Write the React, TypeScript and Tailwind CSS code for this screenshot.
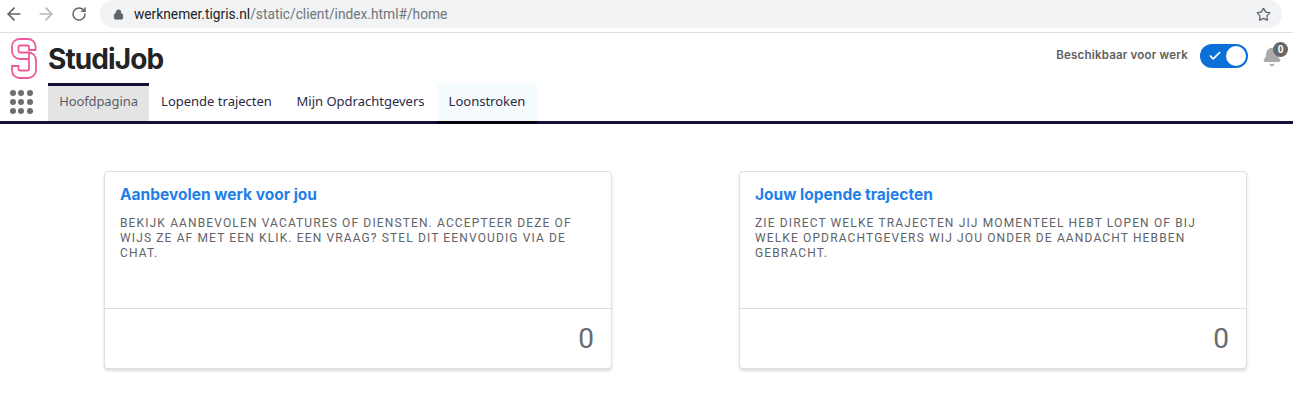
import React from "react";
import { ArrowLeft, ArrowRight, RotateCw, Lock, Star, Bell, Check } from "lucide-react";

const navItems = [
  { label: "Hoofdpagina", className: "w-[101px] bg-[#e4e4e4] text-[#5c5c66] border-t-[3px] border-[#14103a] tracking-[-0.1px]" },
  { label: "Lopende trajecten", className: "w-[135px] text-[#2b2a44] border-t-[3px] border-transparent" },
  { label: "Mijn Opdrachtgevers", className: "w-[153px] text-[#2b2a44] border-t-[3px] border-transparent" },
  { label: "Loonstroken", className: "w-[100px] -mb-[3px] bg-[#f6fbfe] text-[#2b2a44] border-t-[3px] border-t-transparent border-b-[3px] border-b-[#05030f]" },
];

const cards = [
  {
    title: "Aanbevolen werk voor jou",
    text: "Bekijk aanbevolen vacatures of diensten. Accepteer deze of wijs ze af met een klik. Een vraag? Stel dit eenvoudig via de chat.",
  },
  {
    title: "Jouw lopende trajecten",
    text: "Zie direct welke trajecten jij momenteel hebt lopen of bij welke opdrachtgevers wij jou onder de aandacht hebben gebracht.",
  },
];

const Logo: React.FC = () => (
  <svg width="26" height="41" viewBox="0 0 26 41" fill="none" stroke="#ec5a9a" strokeWidth="1.8">
    <path d="M24.500 12V8.500C24.500 4 21 1 17 1H8.500C4 1 1 4.500 1 8.500V13c0 4.500 3.500 8 8 8h7.500c1 0 1.500.5 1.500 1.500V31c0 1-.5 1.500-1.500 1.500H9c-1 0-1.500-.5-1.500-1.500v-3H1v4.500C1 37 4.500 40 8.500 40H17c4.500 0 8-3.500 8-8V22c0-4.500-3.500-7.500-8-7.500H9c-1 0-1.500-.5-1.500-1.500V9c0-1 .5-1.500 1.500-1.500h7.500c1 0 1.500.5 1.500 1.500v3z" />
    <path d="M18 14.500V21" />
  </svg>
);

const DotGrid: React.FC = () => (
  <div className="grid grid-cols-3 gap-x-[3px] gap-y-[3px] w-[22px]">
    {Array.from({ length: 9 }).map((_, i) => (
      <span key={i} className="w-[6px] h-[6px] rounded-full bg-[#6d6d6d]" />
    ))}
  </div>
);

const BrowserBar: React.FC = () => (
  <div className="h-[33px] flex items-start border-b border-[#dedfe1] bg-white">
    <div className="flex items-center h-[28px] pl-[4px] w-[100px]">
      <ArrowLeft size={20} color="#5f6368" strokeWidth={2} />
      <ArrowRight size={20} color="#b4b6b9" strokeWidth={2} className="ml-[12px]" />
      <RotateCw size={16} color="#5f6368" strokeWidth={2.200} className="ml-[15px]" />
    </div>
    <div className="flex items-center h-[28px] w-[1182px] rounded-full bg-[#f1f3f4] pl-[13px] pr-[11px]">
      <Lock size={11} color="#5f6368" fill="#5f6368" />
      <div className="ml-[10px] text-[13.75px] font-['Roboto',sans-serif] text-[#70757a]">
        <span className="text-[#202124]">werknemer.tigris.nl</span>/static/client/index.html#/home
      </div>
      <Star size={15} color="#5f6368" className="ml-auto" />
    </div>
  </div>
);

const Header: React.FC = () => (
  <div className="h-[91px] border-b-[3px] border-[#14103a] bg-white">
    <div className="h-[50px] flex items-center pl-[11px] pr-[5px]">
      <Logo />
      <div className="ml-[11px] mt-[1px] text-[28px] font-bold tracking-[-0.9px] text-[#232323] font-['Inter',sans-serif]">StudiJob</div>
      <div className="ml-auto mb-[4px] flex items-center">
        <span className="text-[11.5px] font-semibold tracking-[0.2px] text-[#5e5e5e] font-['Inter',sans-serif]">Beschikbaar voor werk</span>
        <div className="ml-[12px] w-[48px] h-[24px] rounded-full bg-[#0a6fd6] flex items-center pl-[8px]">
          <Check size={14} color="#fff" strokeWidth={3} />
          <span className="ml-auto mr-[2px] w-[20px] h-[20px] rounded-full bg-white" />
        </div>
        <div className="relative ml-[14px] w-[26px] h-[24px]">
          <Bell size={20} color="#aaaaaa" fill="#aaaaaa" className="absolute top-[3px] left-0" />
          <span className="absolute -top-[2px] left-[11px] w-[15px] h-[15px] rounded-full bg-[#666] text-white text-[10px] font-bold flex items-center justify-center font-['Roboto',sans-serif]">0</span>
        </div>
      </div>
    </div>
    <div className="flex items-stretch h-[38px]">
      <div className="w-[48px] pl-[10px] flex items-center">
        <DotGrid />
      </div>
      {navItems.map((item) => (
        <div
          key={item.label}
          className={`flex items-center justify-center pb-[3px] text-[13px] font-['Noto_Sans',sans-serif] ${item.className}`}
        >
          {item.label}
        </div>
      ))}
    </div>
  </div>
);

const Card: React.FC<{ title: string; text: string }> = ({ title, text }) => (
  <div className="w-[508px] h-[198px] flex flex-col rounded-[4px] border border-[#e0e0e0] bg-white shadow-[0_2px_3px_rgba(0,0,0,0.14)]">
    <div className="h-[137px] border-b border-[#dcdcdc] px-[15px] pt-[13px]">
      <h2 className="text-[15.5px] leading-[20px] font-bold text-[#1f7fe8] font-['Inter',sans-serif]">{title}</h2>
      <p className="mt-[11px] text-[12px] leading-[15px] tracking-[1.13px] uppercase text-[#5f6368] font-['Roboto',sans-serif]">{text}</p>
    </div>
    <div className="flex-1 flex items-center justify-end pt-[1px] pr-[17px] text-[28px] text-[#666c72] font-['Roboto',sans-serif]">0</div>
  </div>
);

export default function App() {
  return (
    <div className="w-[1293px] h-[402px] bg-white overflow-hidden">
      <BrowserBar />
      <Header />
      <div className="flex gap-[127px] pl-[104px] pt-[47px]">
        {cards.map((card) => (
          <Card key={card.title} title={card.title} text={card.text} />
        ))}
      </div>
    </div>
  );
}
